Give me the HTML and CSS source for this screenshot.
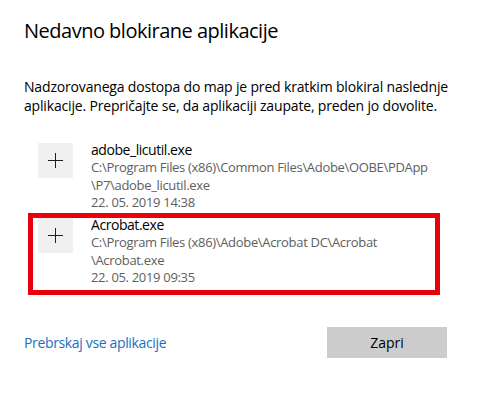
FILE: index.html
```html
<!DOCTYPE html>
<html lang="sl">
<head>
<meta charset="utf-8">
<title>Nedavno blokirane aplikacije</title>
<link rel="stylesheet" href="styles.css">
</head>
<body>
<div class="dialog">
  <h1 class="title">Nedavno blokirane aplikacije</h1>
  <p class="desc">Nadzorovanega dostopa do map je pred kratkim blokiral naslednje aplikacije. Prepričajte se, da aplikaciji zaupate, preden jo dovolite.</p>
  <ul class="apps">
    <li class="app">
      <div class="icon"><svg width="15" height="15" viewBox="0 0 15 15"><path d="M7.5 0V15M0 7.5H15" stroke="#1f1f1f" stroke-width="1" fill="none"/></svg></div>
      <div class="info">
        <div class="name">adobe_licutil.exe</div>
        <div class="meta">C:\Program Files (x86)\Common Files\Adobe\OOBE\PDApp<br>\P7\adobe_licutil.exe</div>
        <div class="meta">22. 05. 2019 14:38</div>
      </div>
    </li>
    <li class="app marked">
      <div class="icon"><svg width="15" height="15" viewBox="0 0 15 15"><path d="M7.5 0V15M0 7.5H15" stroke="#1f1f1f" stroke-width="1" fill="none"/></svg></div>
      <div class="info">
        <div class="name">Acrobat.exe</div>
        <div class="meta">C:\Program Files (x86)\Adobe\Acrobat DC\Acrobat<br>\Acrobat.exe</div>
        <div class="meta">22. 05. 2019 09:35</div>
      </div>
    </li>
  </ul>
  <div class="footer">
    <a class="link" href="#">Prebrskaj vse aplikacije</a>
    <button class="btn" type="button">Zapri</button>
  </div>
</div>
</body>
</html>
```
FILE: styles.css
```css
html, body {
  margin: 0;
  padding: 0;
  background: #ffffff;
}
body {
  font-family: "Open Sans", "Noto Sans", sans-serif;
  color: #000000;
}
.dialog {
  padding: 17px 18px 0 24px;
}
.title {
  margin: 0;
  font-size: 20px;
  line-height: 28px;
  font-weight: 400;
  letter-spacing: -0.5px;
  color: #000;
}
.desc {
  margin: 32px 0 0 0;
  font-size: 14px;
  line-height: 19px;
  letter-spacing: -0.17px;
}
.apps {
  list-style: none;
  margin: 26px 0 0 0;
  padding: 0 0 0 14px;
  display: flex;
  flex-direction: column;
  gap: 4px;
}
.app {
  position: relative;
  display: flex;
  align-items: flex-start;
  gap: 18px;
}
.icon {
  width: 35px;
  height: 35px;
  margin-top: 2px;
  background: #f0f0f0;
  display: flex;
  align-items: center;
  justify-content: center;
  flex: none;
}
.icon svg {
  display: block;
}
.info {
  font-size: 13px;
  line-height: 17.75px;
}
.name {
  color: #000;
  font-size: 14px;
  letter-spacing: -0.45px;
}
.meta {
  color: #5e5e5e;
  letter-spacing: -0.32px;
}
.marked::after {
  content: "";
  position: absolute;
  top: -3px;
  left: -10px;
  width: 402px;
  height: 72px;
  border: 5px solid #e8000b;
  pointer-events: none;
}
.footer {
  margin-top: 40px;
  padding-right: 26px;
  display: flex;
  align-items: center;
  justify-content: space-between;
}
.link {
  font-size: 14px;
  line-height: 19px;
  color: #1a6fc0;
  text-decoration: none;
  letter-spacing: -0.35px;
}
.btn {
  width: 120px;
  height: 31px;
  border: none;
  background: #cccccc;
  font-family: "Open Sans", "Noto Sans", sans-serif;
  font-size: 14px;
  color: #000;
  padding: 0;
}
```
